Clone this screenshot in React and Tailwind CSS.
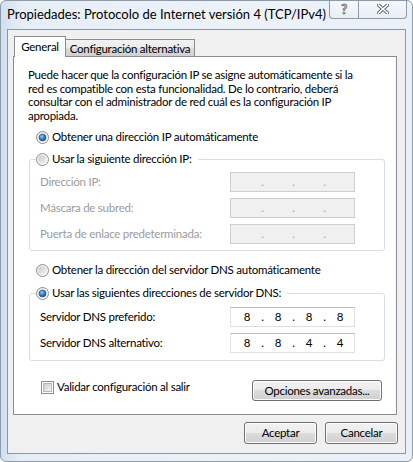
import React from "react";

function Radio({ checked }) {
  return (
    <svg width="13" height="13" viewBox="0 0 13 13" className="shrink-0">
      <defs>
        <linearGradient id="ring" x1="0" y1="0" x2="1" y2="1">
          <stop offset="0" stopColor="#e6e6e6" />
          <stop offset="1" stopColor="#ffffff" />
        </linearGradient>
        <linearGradient id="core" x1="0" y1="0" x2="1" y2="1">
          <stop offset="0" stopColor="#c9c9c9" />
          <stop offset="1" stopColor="#f4f4f4" />
        </linearGradient>
        <radialGradient id="dot" cx="0.4" cy="0.35" r="0.7">
          <stop offset="0" stopColor="#9fd3fa" />
          <stop offset="0.45" stopColor="#3d87d6" />
          <stop offset="1" stopColor="#0f4a8f" />
        </radialGradient>
      </defs>
      <circle cx="6.5" cy="6.5" r="6" fill="url(#ring)" stroke="#8f8f8f" />
      {checked ? (
        <circle cx="6.5" cy="6.5" r="3.5" fill="url(#dot)" stroke="#1f4f86" strokeWidth="0.6" />
      ) : (
        <circle cx="6.5" cy="6.5" r="4" fill="url(#core)" />
      )}
    </svg>
  );
}

function IpBox({ values, disabled }) {
  const vals = values || ["", "", "", ""];
  const cell = "w-[24px] text-center";
  const dot = "w-[7px] text-center";
  return (
    <div
      className={
        disabled
          ? "w-[125px] h-[20px] flex items-center pl-[4px] border border-[#cfcfcf] bg-[#f0f0f0] text-[#a6a6a6]"
          : "w-[125px] h-[20px] flex items-center pl-[4px] border border-[#dde1e6] border-t-[#b9bcc1] bg-white text-black"
      }
    >
      <span className={cell}>{vals[0]}</span>
      <span className={dot}>.</span>
      <span className={cell}>{vals[1]}</span>
      <span className={dot}>.</span>
      <span className={cell}>{vals[2]}</span>
      <span className={dot}>.</span>
      <span className={cell}>{vals[3]}</span>
    </div>
  );
}

function Field({ label, values, disabled }) {
  return (
    <div className="flex items-center justify-between h-[20px]">
      <span className={disabled ? "text-[#9b9b9b]" : "text-black"}>{label}</span>
      <IpBox values={values} disabled={disabled} />
    </div>
  );
}

function Button({ children, className }) {
  return (
    <button
      className={
        "rounded-[3px] border border-[#707070] bg-[linear-gradient(#f2f2f2,#ebebeb_50%,#dddddd_50%,#cfcfcf)] shadow-[inset_0_0_0_1px_#fcfcfc] text-black flex items-center justify-center " +
        className
      }
    >
      {children}
    </button>
  );
}

export default function App() {
  return (
    <div className="w-[413px] h-[462px] flex flex-col rounded-[6px] border border-[#8d9aa8] bg-[linear-gradient(90deg,#cfe0f0,#e6eef6_5%,#edf2f8_60%,#e9f0f7)] overflow-hidden font-['Lato','Liberation_Sans',sans-serif] text-[11.5px] tracking-[-0.25px] text-black">
      {/* title bar */}
      <div className="h-[28px] flex items-start justify-between">
        <div className="pl-[6px] pt-[5px] leading-[16px] whitespace-nowrap text-[13px] tracking-normal">
          Propiedades: Protocolo de Internet versión 4 (TCP/IPv4)
        </div>
        <div className="flex mr-[5px] -mt-[1px]">
          <div className="w-[29px] h-[19px] flex items-center justify-center border border-[#8e9aa7] border-t-0 border-r-0 rounded-bl-[4px] bg-[linear-gradient(#f6f8fb,#e9eef4)]">
            <span className="text-[13px] font-bold text-white [-webkit-text-stroke:0.8px_#5b6470] leading-none">?</span>
          </div>
          <div className="w-[49px] h-[19px] flex items-center justify-center border border-[#8e9aa7] border-t-0 rounded-br-[4px] bg-[linear-gradient(#f6f8fb,#e9eef4)]">
            <svg width="12" height="10" viewBox="0 0 12 10">
              <path d="M1.5 1 L10.5 9 M10.5 1 L1.5 9" stroke="#5b6470" strokeWidth="3.4" strokeLinecap="square" />
              <path d="M1.5 1 L10.5 9 M10.5 1 L1.5 9" stroke="#ffffff" strokeWidth="1.6" strokeLinecap="square" />
            </svg>
          </div>
        </div>
      </div>

      {/* client area */}
      <div className="mx-[6px] h-[425px] border border-[#8b97a3] bg-[#f0f0f0] flex flex-col">
        {/* tabs */}
        <div className="mt-[6px] ml-[5px] h-[20px] flex items-end">
          <div className="relative z-10 -mb-[1px] ml-[1px] w-[52px] h-[21px] bg-white border border-b-0 border-[#898c95] flex items-start justify-center pt-[2px] leading-[15px]">
            General
          </div>
          <div className="w-[129px] h-[17px] border border-l-0 border-b-0 border-[#898c95] bg-[linear-gradient(#f2f2f2,#ebebeb_50%,#dddddd_50%,#cfcfcf)] flex items-center justify-center leading-[15px] whitespace-nowrap">
            Configuración alternativa
          </div>
        </div>

        {/* panel */}
        <div className="ml-[5px] w-[384px] h-[359px] border border-[#898c95] bg-white flex flex-col">
          <p className="mt-[11px] pl-[14px] leading-[13.5px] whitespace-nowrap">
            Puede hacer que la configuración IP se asigne automáticamente si la
            <br />
            red es compatible con esta funcionalidad. De lo contrario, deberá
            <br />
            consultar con el administrador de red cuál es la configuración IP
            <br />
            apropiada.
          </p>

          <div className="mt-[7px] pl-[22px] h-[16px] flex items-center gap-[3px]">
            <Radio checked />
            <span>Obtener una dirección IP automáticamente</span>
          </div>

          <div className="mt-[6px] ml-[15px] mr-[11px]">
            <fieldset className="h-[100px] border border-[#d5dfe5] rounded-[3px] pl-[10px] pr-[29px]">
              <legend className="-ml-[4px] pr-[6px] h-[16px] flex items-center gap-[3px]">
                <Radio />
                <span>Usar la siguiente dirección IP:</span>
              </legend>
              <div className="mt-[5px] flex flex-col gap-[6px]">
                <Field label="Dirección IP:" disabled />
                <Field label="Máscara de subred:" disabled />
                <Field label="Puerta de enlace predeterminada:" disabled />
              </div>
            </fieldset>
          </div>

          <div className="mt-[11px] pl-[22px] h-[16px] flex items-center gap-[3px]">
            <Radio />
            <span>Obtener la dirección del servidor DNS automáticamente</span>
          </div>

          <div className="mt-[7px] ml-[15px] mr-[11px]">
            <fieldset className="h-[76px] border border-[#d5dfe5] rounded-[3px] pl-[10px] pr-[29px]">
              <legend className="-ml-[4px] pr-[6px] h-[16px] flex items-center gap-[3px]">
                <Radio checked />
                <span>Usar las siguientes direcciones de servidor DNS:</span>
              </legend>
              <div className="mt-[6px] flex flex-col gap-[6px]">
                <Field label="Servidor DNS preferido:" values={["8", "8", "8", "8"]} />
                <Field label="Servidor DNS alternativo:" values={["8", "8", "4", "4"]} />
              </div>
            </fieldset>
          </div>

          <div className="mt-[19px] pl-[27px] pr-[14px] flex items-start justify-between">
            <div className="flex items-center gap-[3px] h-[14px]">
              <div className="w-[13px] h-[13px] border border-[#8e8f8f] bg-white p-[1px]">
                <div className="w-full h-full bg-linear-to-br from-[#cbcbcb] to-[#f7f7f7] border border-[#b9b9b9]" />
              </div>
              <span>Validar configuración al salir</span>
            </div>
            <Button className="w-[130px] h-[21px]">Opciones avanzadas...</Button>
          </div>
        </div>

        {/* dialog buttons */}
        <div className="mt-[7px] mr-[7px] flex justify-end gap-[8px]">
          <Button className="w-[73px] h-[22px]">Aceptar</Button>
          <Button className="w-[73px] h-[22px]">Cancelar</Button>
        </div>
      </div>
    </div>
  );
}
